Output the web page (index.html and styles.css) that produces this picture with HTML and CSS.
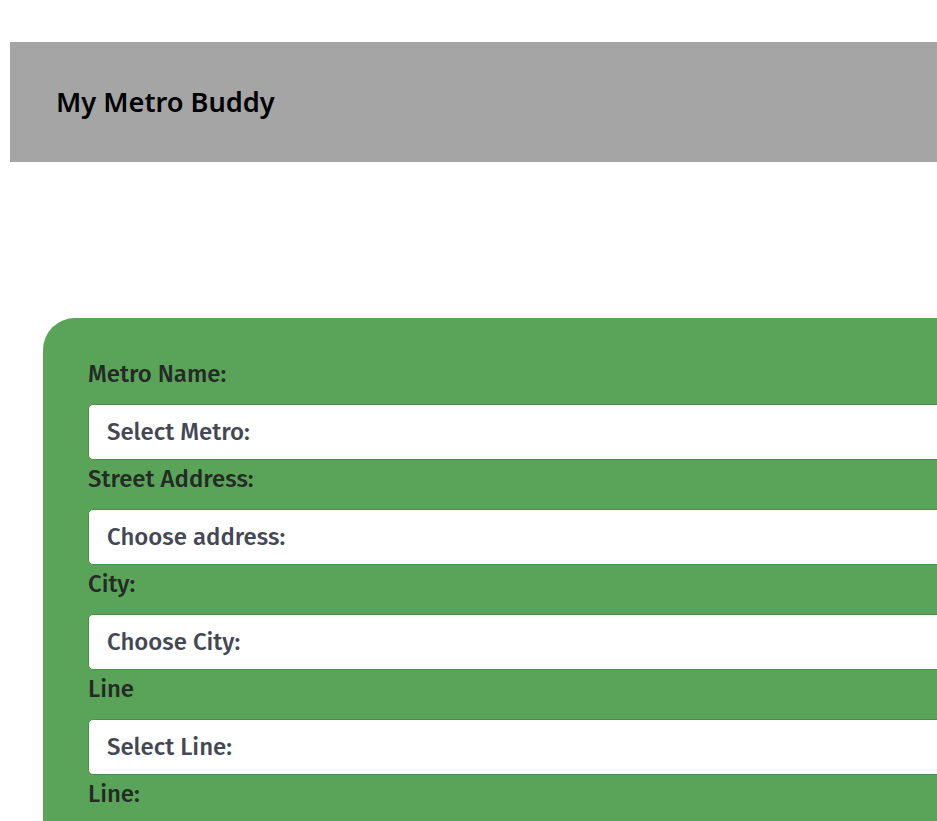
FILE: index.html
```html
<!DOCTYPE html>
<html lang="en">
<head>
<meta charset="utf-8">
<title>My Metro Buddy</title>
<link rel="stylesheet" href="styles.css">
</head>
<body>
<header class="topbar">
  <h1 class="brand">My Metro Buddy</h1>
</header>
<main class="content">
  <form class="card">
    <label class="field-label">Metro Name:</label>
    <div class="select-box">Select Metro:</div>
    <label class="field-label">Street Address:</label>
    <div class="select-box">Choose address:</div>
    <label class="field-label">City:</label>
    <div class="select-box">Choose City:</div>
    <label class="field-label">Line</label>
    <div class="select-box">Select Line:</div>
    <label class="field-label">Line:</label>
  </form>
</main>
</body>
</html>
```
FILE: styles.css
```css
html, body {
  margin: 0;
  padding: 0;
  overflow: hidden;
  background: #ffffff;
}
body {
  padding: 42px 0 0 10px;
  width: 1400px;
}
.topbar {
  background: #a5a5a5;
  height: 120px;
  display: flex;
  align-items: center;
  padding-left: 46px;
}
.brand {
  margin: 0;
  font-family: "Noto Sans", "Open Sans", sans-serif;
  font-weight: 600;
  font-size: 27.2px;
  color: #000;
  padding-bottom: 2px;
}
.content {
  padding: 156px 0 0 33px;
}
.card {
  background: #5aa459;
  border-top-left-radius: 32px;
  padding: 37px 0 40px 45px;
  display: flex;
  flex-direction: column;
  min-height: 600px;
}
.field-label {
  font-family: "Fira Sans", sans-serif;
  font-weight: 500;
  font-size: 24px;
  line-height: 36px;
  padding-top: 1px;
  color: #252a27;
  margin-bottom: 12px;
}
.select-box {
  background: #fff;
  border: 1px solid #4a8d49;
  border-radius: 5px;
  height: 54px;
  box-sizing: content-box;
  display: flex;
  align-items: center;
  padding-left: 18px;
  font-family: "Fira Sans", sans-serif;
  font-weight: 500;
  font-size: 24px;
  color: #444854;
}
```
